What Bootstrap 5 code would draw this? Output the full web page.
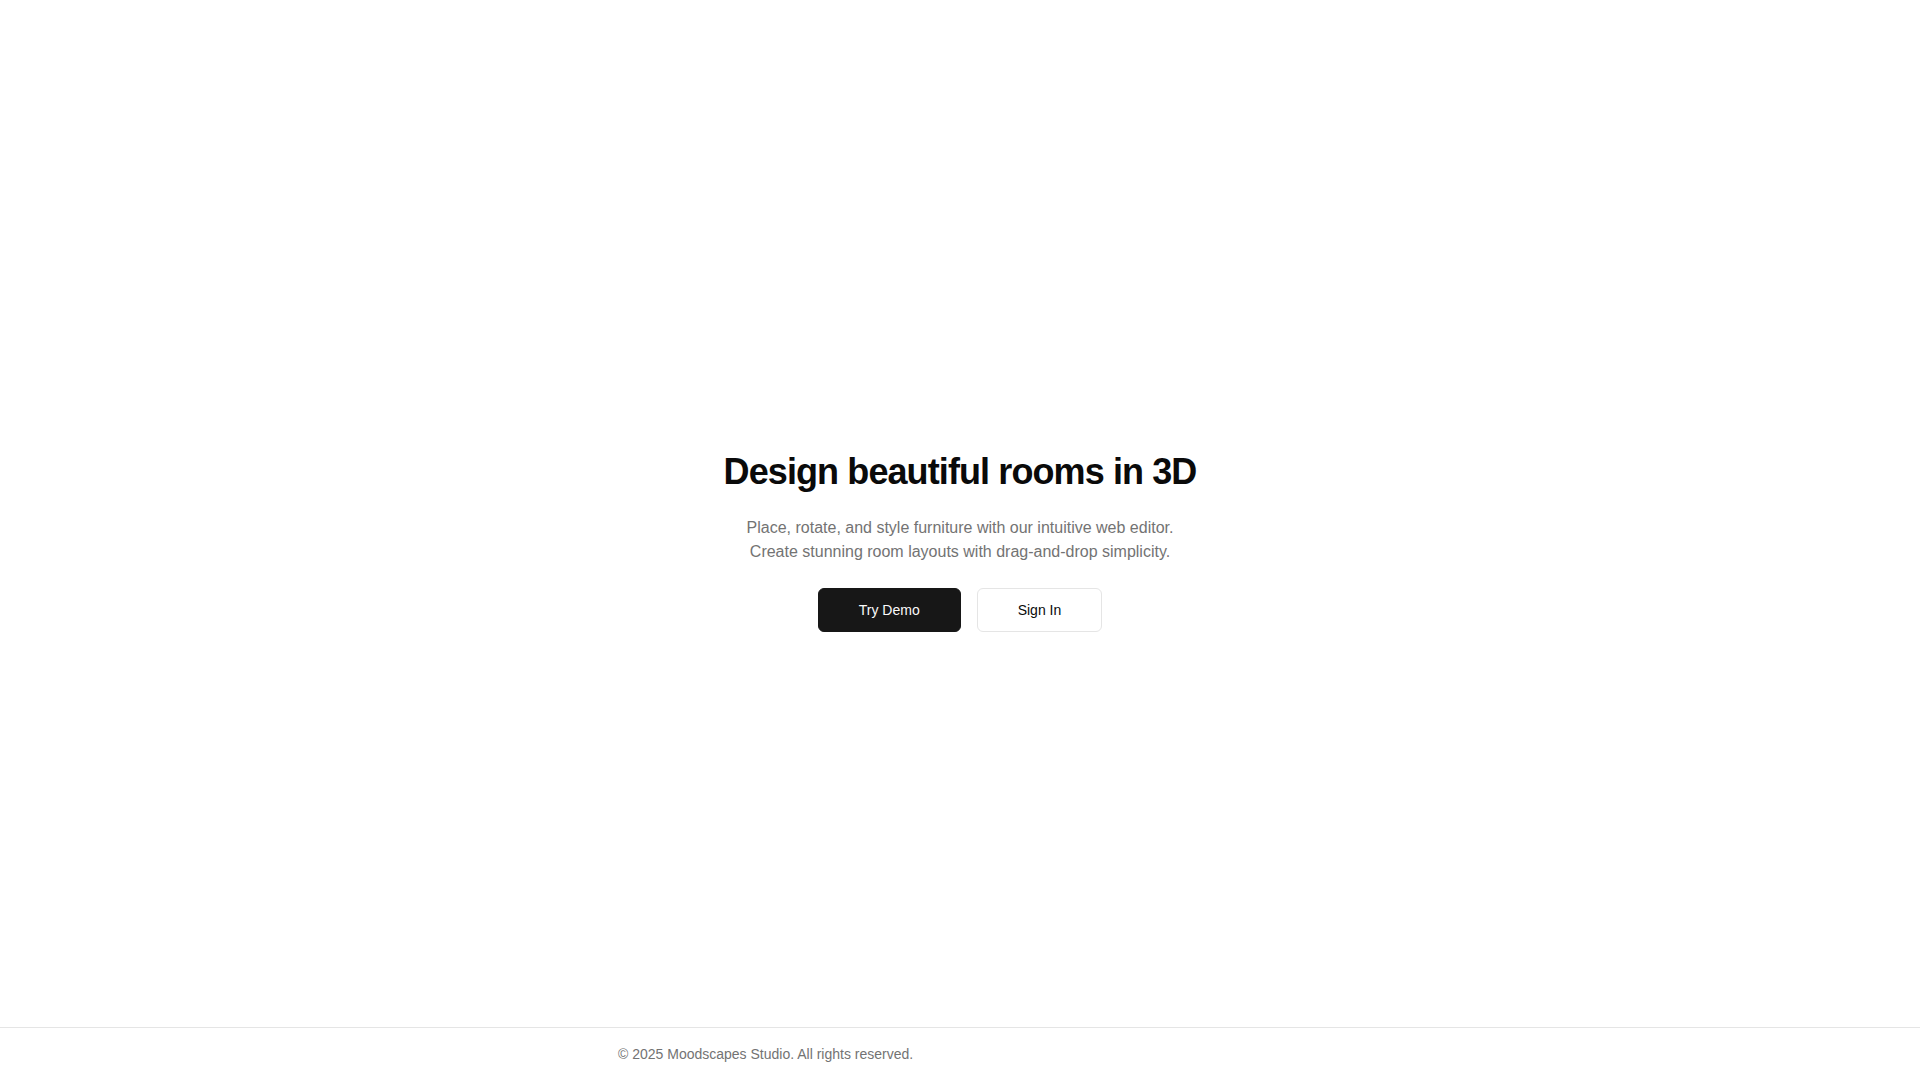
<!DOCTYPE html>
<html lang="en">
<head>
<meta charset="utf-8">
<meta name="viewport" content="width=device-width, initial-scale=1">
<title>Moodscapes Studio</title>
<link href="https://cdn.jsdelivr.net/npm/bootstrap@5.3.0/dist/css/bootstrap.min.css" rel="stylesheet">
<style>
  body { font-family: "Liberation Sans", Arial, sans-serif; color: #0a0a0a; background: #fff; }
  .hero { padding-top: 56px; }
  .hero-title { font-size: 36px; line-height: 40px; font-weight: 700; letter-spacing: -0.025em; margin-bottom: 24px; }
  .hero-text { font-size: 16px; line-height: 24px; color: #737373; max-width: 448px; margin-bottom: 24px; }
  .hero-btn { font-size: 14px; line-height: 20px; padding: 11px 40px; border-radius: 6px; }
  .hero-btn-dark { --bs-btn-color: #fafafa; --bs-btn-bg: #171717; --bs-btn-border-color: #171717; --bs-btn-hover-color: #fafafa; --bs-btn-hover-bg: #2e2e2e; }
  .hero-btn-light { --bs-btn-color: #0a0a0a; --bs-btn-bg: #fff; --bs-btn-border-color: #e5e5e5; --bs-btn-hover-bg: #f5f5f5; --bs-btn-hover-border-color: #e5e5e5; }
  .site-footer { border-top: 1px solid #e5e5e5; }
  .footer-inner { max-width: 684px; font-size: 14px; line-height: 20px; color: #737373; }
</style>
</head>
<body class="min-vh-100 d-flex flex-column">
<main class="hero flex-grow-1 d-flex flex-column align-items-center justify-content-center text-center px-3">
  <h1 class="hero-title">Design beautiful rooms in 3D</h1>
  <p class="hero-text">Place, rotate, and style furniture with our intuitive web editor. Create stunning room layouts with drag-and-drop simplicity.</p>
  <div class="d-flex gap-3">
    <button type="button" class="btn hero-btn hero-btn-dark">Try Demo</button>
    <button type="button" class="btn hero-btn hero-btn-light">Sign In</button>
  </div>
</main>
<footer class="site-footer py-3">
  <div class="footer-inner w-100 mx-auto">© 2025 Moodscapes Studio. All rights reserved.</div>
</footer>
<script src="https://cdn.jsdelivr.net/npm/bootstrap@5.3.0/dist/js/bootstrap.bundle.min.js"></script>
</body>
</html>
